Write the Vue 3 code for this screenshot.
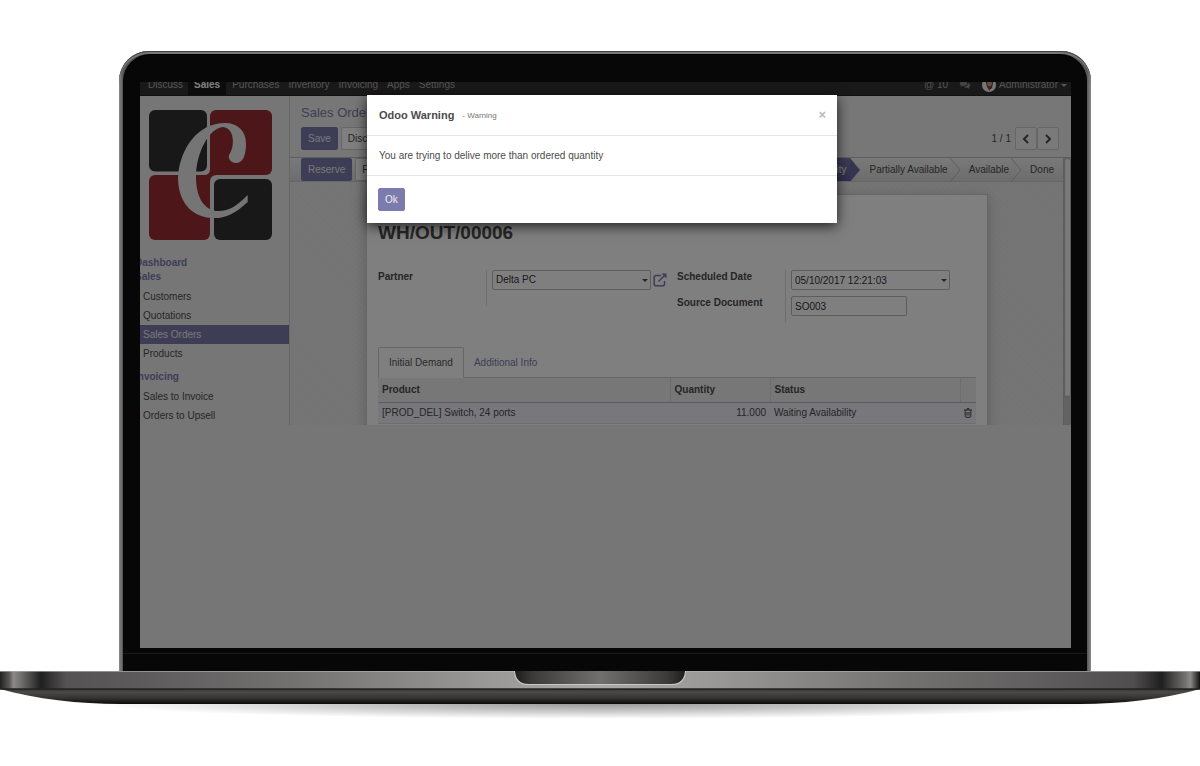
<script setup>
import { ref } from 'vue'

const apps = ['Discuss', 'Sales', 'Purchases', 'Inventory', 'Invoicing', 'Apps', 'Settings']
const sections = [
  { title: 'Dashboard', items: [] },
  { title: 'Sales', items: ['Customers', 'Quotations', 'Sales Orders', 'Products'] },
  { title: 'Invoicing', items: ['Sales to Invoice', 'Orders to Upsell'] }
]
const stages = ['Waiting Availability', 'Partially Available', 'Available', 'Done']
const partner = ref('Delta PC')
const scheduled = ref('05/10/2017 12:21:03')
const source = ref('SO003')
</script>

<template>
  <main class="page">
    <div class="lid">
      <div class="bezel">
        <div class="screen">
          <header class="topbar">
            <nav class="apps">
              <a v-for="a in apps" :key="a" href="#" :class="{ current: a === 'Sales' }">{{ a }}</a>
            </nav>
            <div class="user">
              <span class="count">@ 10</span>
              <svg class="chat" viewBox="0 0 12 10"><path d="M4.500 1C2.300 1 .8 2.100.8 3.500c0 .8.500 1.500 1.200 1.900L1.500 7l2-1.100h1C6.700 5.900 8.200 4.900 8.200 3.500S6.700 1 4.500 1Z" /><path d="M9 3c0 2-1.600 3.700-4.300 3.700C5.500 7.600 7 8 8.300 7.700L10.500 9 10 7.300c2-1.200 1.500-3.600-1-4.300Z" /></svg>
              <svg class="avatar" viewBox="0 0 14 14"><circle cx="7" cy="7" r="7" fill="#eee" /><path d="M4 5c0-5 7-5 7 0l-1 5-3 2-2-3Z" fill="#5d4038" /><ellipse cx="7.500" cy="5.500" rx="2.300" ry="3" fill="#d09a86" /><path d="m6 9 1.500 4L9 9Z" fill="#a33" /></svg>
              <span>Administrator</span><i class="caret"></i>
            </div>
          </header>
          <div class="app">
            <aside class="side">
              <svg class="logo" viewBox="0 0 123 130">
                <g fill="#9b2e35"><rect x="61" width="62" height="65" rx="6" /><rect y="65" width="61" height="65" rx="6" /><path d="M50 56h20v18H50Z" /></g>
                <g fill="#eceaea"><path d="M54 0h7v59q0 6-6 6H0v-6h54Z" /><path d="M61 130V72q0-7 7-7h55v6H67v59Z" /></g>
                <g fill="#333032"><rect width="58" height="61.500" rx="6" /><rect x="65" y="69" width="58" height="61" rx="6" /></g>
                <path d="M98.700 85v7C86 104 75 109 62 108 39 106 29 88 29 67 31 38 49 13 76 13c13 0 21 8 21 21 0 11-3 19-10 19-5 0-8-4-7-8 6-8 6-27-6-28C60 18 47 43 47 67c0 19 7 32 20 34 12 1 21-5 31.700-16Z" fill="#eceaea" />
              </svg>
              <nav class="menu">
                <section v-for="s in sections" :key="s.title">
                  <h2>{{ s.title }}</h2>
                  <ul v-if="s.items.length">
                    <li v-for="i in s.items" :key="i"><a href="#" :class="{ on: i === 'Sales Orders' }">{{ i }}</a></li>
                  </ul>
                </section>
              </nav>
            </aside>
            <section class="content">
              <div class="panel">
                <h1>Sales Orders</h1>
                <div class="tools">
                  <button class="btn primary">Save</button>
                  <button class="btn">Discard</button>
                  <span class="pager">1 / 1</span>
                  <span class="pages">
                    <button class="btn" aria-label="Previous"><svg viewBox="0 0 8 10"><path d="M6 1 2 5l4 4" /></svg></button>
                    <button class="btn" aria-label="Next"><svg viewBox="0 0 8 10"><path d="m2 1 4 4-4 4" /></svg></button>
                  </span>
                </div>
              </div>
              <div class="scroller">
                <div class="form">
                  <div class="status">
                    <button class="btn primary">Reserve</button>
                    <button class="btn">Force</button>
                    <ol>
                      <li v-for="(s, n) in stages" :key="s" :class="{ active: n === 0 }">
                        <span>{{ s }}</span>
                        <svg v-if="n < 3" viewBox="0 0 11 24"><path d="M0 0 10 12 0 24" /></svg>
                      </li>
                    </ol>
                  </div>
                  <div class="sheet">
                    <h2>WH/OUT/00006</h2>
                    <div class="fields">
                      <label for="partner">Partner</label>
                      <div class="values">
                        <div class="combo"><select id="partner" v-model="partner"><option>Delta PC</option></select><i class="caret"></i></div>
                        <a href="#" class="ext" aria-label="Open partner"><svg viewBox="0 0 14 14"><path d="M8 2.500H3Q1.200 2.500 1.200 4.300v6.700Q1.200 12.800 3 12.800h6.700q1.800 0 1.800-1.800V8M5.500 8.500 12 2" /><path class="fill" d="M8.500.5h5v5Z" /></svg></a>
                      </div>
                      <div class="labels"><label for="date">Scheduled Date</label><label for="source">Source Document</label></div>
                      <div class="values stack">
                        <div class="combo"><input id="date" v-model="scheduled"><i class="caret"></i></div>
                        <input id="source" v-model="source" class="short">
                      </div>
                    </div>
                    <div class="tabs"><button class="open">Initial Demand</button><button>Additional Info</button></div>
                    <table>
                      <colgroup><col><col class="c-qty"><col class="c-status"><col class="c-del"></colgroup>
                      <thead><tr><th>Product</th><th>Quantity</th><th>Status</th><th></th></tr></thead>
                      <tbody><tr><td>[PROD_DEL] Switch, 24 ports</td><td class="num">11.000</td><td>Waiting Availability</td>
                        <td><button class="trash" aria-label="Delete"><svg viewBox="0 0 8 10"><path d="M0 2h8M3 2V.7h2V2M1.200 2v6.300q0 1 1 1h3.600q1 0 1-1V2M3 4v3.500M5 4v3.500" /></svg></button></td></tr></tbody>
                    </table>
                  </div>
                </div>
                <div class="track"><div class="thumb"></div></div>
              </div>
            </section>
          </div>
          <div class="backdrop">
            <div class="modal" role="dialog" aria-labelledby="dlg-title">
              <div class="m-head"><h3 id="dlg-title">Odoo Warning</h3><small>- Warning</small><button class="close" aria-label="Close">×</button></div>
              <p>You are trying to delive more than ordered quantity</p>
              <div class="m-foot"><button class="btn primary">Ok</button></div>
            </div>
          </div>
        </div>
      </div>
    </div>
    <svg class="base" viewBox="0 0 1200 52" preserveAspectRatio="none">
      <defs>
        <linearGradient id="deck"><stop offset="0" stop-color="#222" /><stop offset=".008" stop-color="#5b5a59" /><stop offset=".011" stop-color="#8c8a88" /><stop offset=".017" stop-color="#747270" /><stop offset=".034" stop-color="#201f20" /><stop offset=".055" stop-color="#555354" /><stop offset=".12" stop-color="#5d5b5c" /><stop offset=".25" stop-color="#757371" /><stop offset=".4" stop-color="#999796" /><stop offset=".5" stop-color="#aaa9a7" /><stop offset=".6" stop-color="#999796" /><stop offset=".75" stop-color="#757371" /><stop offset=".88" stop-color="#5d5b5c" /><stop offset=".945" stop-color="#4f4d4e" /><stop offset=".968" stop-color="#201f20" /><stop offset=".988" stop-color="#747270" /><stop offset=".992" stop-color="#8c8a88" /><stop offset="1" stop-color="#111" /></linearGradient>
        <linearGradient id="under" x2="0" y2="1"><stop offset="0" stop-color="#333231" /><stop offset=".2" stop-color="#4b4a49" /><stop offset=".6" stop-color="#343332" /><stop offset="1" stop-color="#0a0a0a" /></linearGradient>
        <linearGradient id="notch"><stop offset="0" stop-color="#1d1c1b" /><stop offset=".1" stop-color="#3b3a38" /><stop offset=".5" stop-color="#71706f" /><stop offset=".9" stop-color="#3b3a38" /><stop offset="1" stop-color="#1d1c1b" /></linearGradient>
        <radialGradient id="shade"><stop offset="0" stop-color="#000" stop-opacity=".42" /><stop offset=".5" stop-color="#000" stop-opacity=".22" /><stop offset="1" stop-color="#000" stop-opacity="0" /></radialGradient>
      </defs>
      <ellipse cx="600" cy="32" rx="510" ry="16" fill="url(#shade)" />
      <path d="M0 18h1200C1165 28 1120 33 1080 33H120C80 33 35 28 0 18Z" fill="url(#under)" />
      <rect width="1200" height="18" fill="url(#deck)" />
      <path d="M0 .5h1200" stroke="#b9b8b6" stroke-opacity=".6" />
      <path d="M0 18h1200" stroke="#242322" stroke-width="1.500" />
      <path d="M514 0h172q-1 14-14 14H528Q515 14 514 0Z" fill="#c9c7c4" />
      <path d="M515 0h170q-1 13-14 13H529Q516 13 515 0Z" fill="url(#notch)" />
    </svg>
  </main>
</template>

<style>
body { margin: 0; background: #fff; }
</style>

<style scoped>
* { box-sizing: border-box; }
.page { padding-top: 51px; overflow: hidden; font: 10px/14px "Liberation Sans", Arial, sans-serif; color: #4c4c4c; }
h1, h2, h3, p, ul, ol { margin: 0; padding: 0; list-style: none; }
a { text-decoration: none; color: inherit; }
button, input, select { font: inherit; color: inherit; margin: 0; }
.lid { margin: 0 109px 0 119px; border-radius: 30px 30px 0 0; padding: 3px 4px 0; background: linear-gradient(90deg, #8b8b8b, #555 4px, #555 calc(100% - 4px), #8b8b8b); box-shadow: inset 0 1px 0 #444, inset 0 3px 0 #777; }
.bezel { padding: 28px 16px 23px 17px; background: linear-gradient(#070707, #070707) no-repeat 0 0 / 100% calc(100% - 18px), linear-gradient(#191919, #191919) no-repeat 0 100% / 100% 18px; border-radius: 27px 27px 0 0; box-shadow: inset 0 -17px 0 #070707, inset 0 1px 0 #000; }
.screen { position: relative; overflow: hidden; min-height: 566px; background: #ececec; }
.topbar { height: 14px; background: #333; display: flex; justify-content: space-between; align-items: flex-end; color: #a8a8a8; overflow: hidden; line-height: 20px; border-bottom: 1px solid #222; }
.apps { display: flex; padding-left: 4px; }
.apps a { padding: 0 5px 0 4px; height: 20px; }
.apps .current { background: #181818; color: #fff; padding: 0 6px; margin-right: 2px; font-weight: 700; }
.user { display: flex; align-items: center; padding-right: 4px; height: 20px; }
.chat { width: 12px; height: 10px; margin: 0 11px; fill: #888; }
.avatar { width: 14px; height: 14px; margin-right: 3px; }
.caret { border: 3px solid transparent; border-top-color: #4c4c4c; border-bottom: 0; }
.user .caret { border-top-color: #a8a8a8; margin-left: 3px; }
.app { display: flex; height: 329px; }
.side { width: 150px; flex: none; background: #eeecec; border-right: 1px solid #ccc; overflow: hidden; }
.logo { display: block; width: 123px; height: 130px; margin: 14px 0 16px 9px; }
.menu h2 { font-size: 10px; line-height: 14px; color: #7c7bad; margin-left: -5px; }
.menu ul { padding: 3px 0 7px; }
.menu li a { display: block; line-height: 19px; padding-left: 3px; }
.menu .on { background: #7c7bad; color: #eee; }
.content { flex: 1; min-width: 0; display: flex; flex-direction: column; }
.panel { height: 62px; padding: 8px 12px 0 11px; background: #f0eeee; border-bottom: 1px solid #bbb; }
h1 { font-size: 13px; line-height: 18px; font-weight: 400; color: #7c7bad; }
.tools { display: flex; align-items: center; gap: 3px; margin-top: 5px; }
.btn { height: 23px; padding: 0 6px; border: 1px solid #ccc; border-radius: 2px; background: #fff; white-space: nowrap; line-height: 20px; }
.primary { background: #7c7bad; border-color: #7c7bad; color: #eee; }
.pager { margin-left: auto; padding-right: 1px; }
.pages { display: flex; }
.pages .btn { width: 22px; background: #f4f4f4; }
.pages svg { display: block; width: 8px; height: 10px; fill: none; stroke: #4c4c4c; stroke-width: 2; }
.scroller { flex: 1; display: flex; min-height: 0; }
.form { flex: 1; min-width: 0; overflow: hidden; background: repeating-linear-gradient(45deg, #e8e8e8 0 2px, #ebebeb 2px 4px); }
.status { height: 24px; display: flex; gap: 3px; padding-left: 11px; background: linear-gradient(#f3f3f3, #dadada); border-bottom: 1px solid #ccc; }
ol { display: flex; margin-left: auto; }
ol li { display: flex; padding-left: 8px; line-height: 24px; }
ol li:last-child { padding-right: 9px; }
ol svg { width: 11px; height: 24px; margin-left: 2px; fill: none; stroke: #bbb; }
ol .active { color: #fff; background: linear-gradient(#7c7bad, #5f5e97) no-repeat 0 0 / calc(100% - 11px) 100%; }
ol .active svg { fill: #6e6da2; stroke: none; margin-left: 4px; }
.sheet { margin: 12px 75px 0 76px; height: 260px; padding: 26px 11px 0; background: #fff; border: 1px solid #ccc; box-shadow: 0 3px 12px #bbb; }
.sheet h2 { font-size: 19px; line-height: 24px; }
.fields { display: grid; grid-template-columns: 108px 1fr 108px 1fr; margin-top: 25px; height: 53px; align-items: start; font-size: 10px; }
label { display: block; font-weight: 700; white-space: nowrap; }
.labels { display: grid; gap: 12px; }
.values { display: flex; align-items: center; gap: 2px; border-left: 1px solid #ddd; padding: 0 0 16px 5px; }
.stack { flex-direction: column; align-items: flex-start; gap: 6px; padding-bottom: 7px; padding-right: 26px; }
.combo { position: relative; flex: 1; width: 100%; }
.combo .caret { position: absolute; right: 3px; top: 9px; }
select, input { appearance: none; display: block; width: 100%; height: 20px; padding: 0 3px; border: 1px solid #bbb; border-radius: 2px; background: #fff; color: #333; }
.short { width: 116px; }
.ext { width: 14px; height: 14px; margin-right: 10px; }
.ext svg { display: block; width: 14px; height: 14px; fill: none; stroke: #7c7bad; stroke-width: 1.5; }
.ext .fill { fill: #7c7bad; stroke: none; }
.tabs { display: flex; height: 31px; margin-top: 24px; border-bottom: 1px solid #ccc; }
.tabs button { height: 31px; padding: 0 10px; border: 0; background: none; color: #7c7bad; }
.tabs .open { border: 1px solid #ccc; border-bottom-color: #fff; border-radius: 2px 2px 0 0; background: #fff; color: #555; }
table { width: 100%; border-collapse: collapse; table-layout: fixed; }
.c-qty { width: 100px; } .c-status { width: 190px; } .c-del { width: 16px; }
th, td { text-align: left; padding: 0 4px; height: 24px; }
th { background: #eee; border-right: 1px solid #ddd; border-bottom: 1px solid #bbb; }
th:last-child { border-right: 0; }
td { height: 21px; background: #efeff8; border-bottom: 1px solid #ddd; }
.num { text-align: right; }
.trash { display: block; padding: 0; border: 0; background: none; }
.trash svg { display: block; width: 8px; height: 10px; fill: none; stroke: #4c4c4c; }
.track { width: 8px; background: #c4c4c4; border-left: 1px solid #bbb; }
.thumb { height: 239px; background: #f4f4f4; border: 1px solid #bbb; border-radius: 3px; }
.backdrop { position: absolute; inset: 0; display: flex; justify-content: center; align-items: flex-start; padding: 13px 7px 0 0; background: rgba(0, 0, 0, .5); }
.modal { width: 470px; background: #fff; box-shadow: 0 3px 12px rgba(0, 0, 0, .75); }
.m-head { display: flex; align-items: center; height: 41px; padding: 0 11px 0 12px; border-bottom: 1px solid #e5e5e5; }
.m-head h3 { font-size: 11px; }
small { font-size: 8px; margin-left: 8px; color: #777; padding-top: 2px; }
.close { margin-left: auto; padding: 0; border: 0; background: none; color: #bbb; font-size: 13px; font-weight: 700; }
.modal p { padding: 13px 12px 12px; }
.m-foot { padding: 12px 11px; border-top: 1px solid #e5e5e5; }
.base { display: block; width: 100%; height: 52px; }
</style>
